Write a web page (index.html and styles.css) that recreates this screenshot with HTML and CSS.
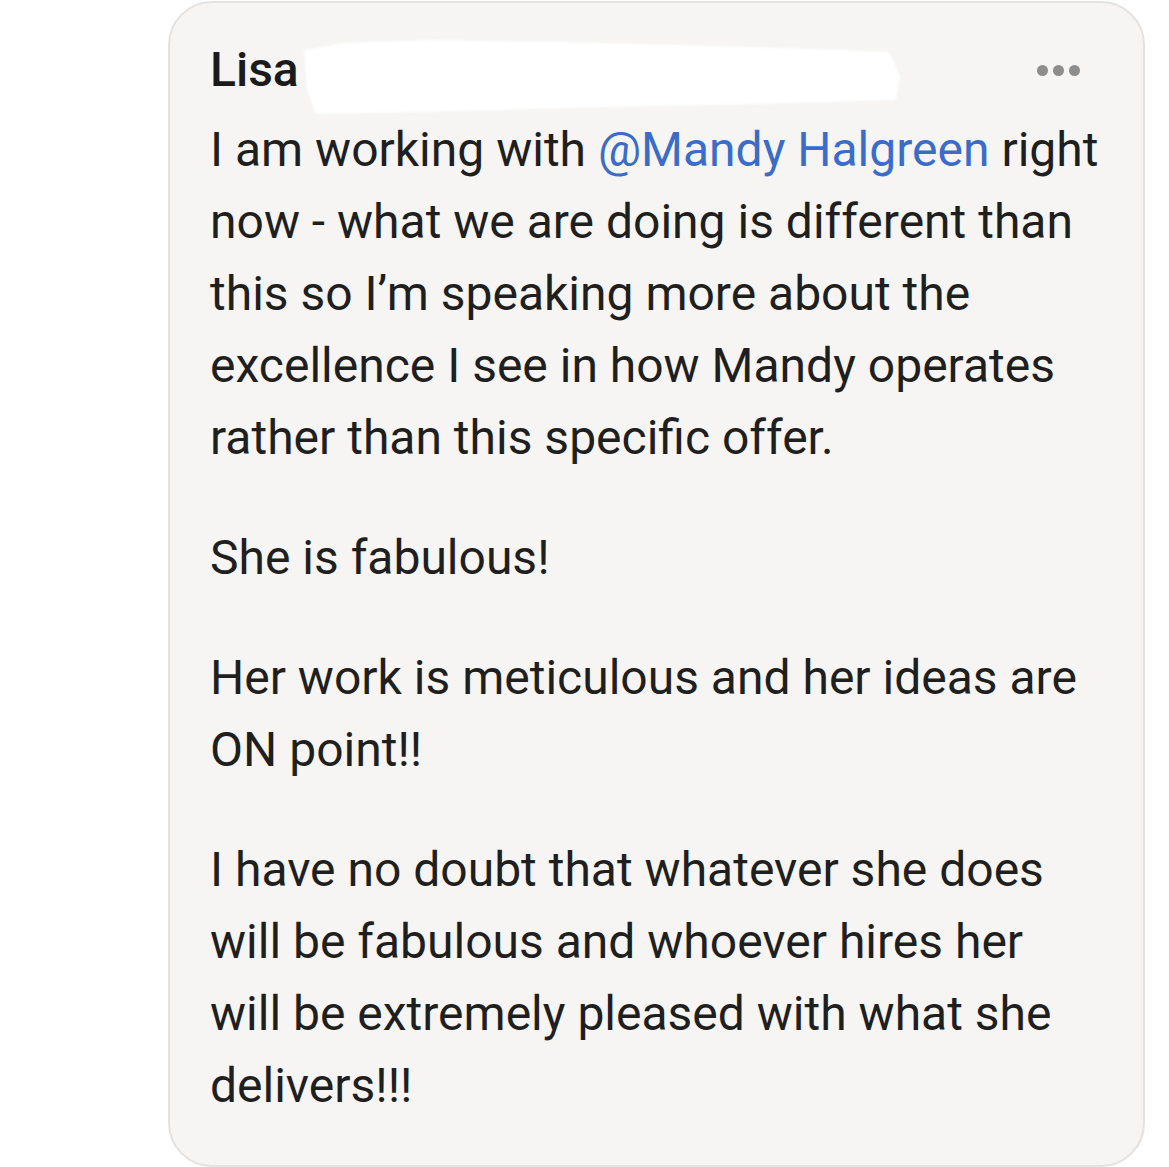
FILE: index.html
```html
<!DOCTYPE html>
<html lang="en">
<head>
<meta charset="utf-8">
<title>Comment</title>
<link rel="stylesheet" href="styles.css">
</head>
<body>
<div class="page">
  <article class="card">
    <header class="card-header">
      <span class="author">Lisa</span>
      <span class="more" aria-label="More options"><i></i><i></i><i></i></span>
    </header>
    <div class="body">
      <p>I am working with <span class="mention">@Mandy Halgreen</span> right now - what we are doing is different than this so I’m speaking more about the excellence I see in how Mandy operates rather than this specific offer.</p>
      <p>She is fabulous!</p>
      <p>Her work is meticulous and her ideas are ON point!!</p>
      <p>I have no doubt that whatever she does will be fabulous and whoever hires her will be extremely pleased with what she delivers!!!</p>
    </div>
    <svg class="redact" width="600" height="80" viewBox="0 0 600 80" aria-hidden="true">
      <polygon points="0,12 40,5 130,2 300,5 480,10 585,14 596,38 592,62 450,66 300,69 150,73 12,76 3,52" fill="#ffffff"/>
    </svg>
  </article>
</div>
</body>
</html>
```

FILE: styles.css
```css
html, body {
  margin: 0;
  padding: 0;
  background: #ffffff;
}

.page {
  padding: 1px 0 0 168px;
}

.card {
  position: relative;
  box-sizing: border-box;
  width: 977px;
  background: #f6f5f4;
  border: 2px solid #e3e2e1;
  border-radius: 44px;
  padding: 31px 39px 43px 40px;
  font-family: Roboto, "Noto Sans", "Liberation Sans", sans-serif;
  font-size: 48px;
  line-height: 72px;
  color: #1f1f20;
}

.card-header {
  display: flex;
  align-items: center;
  justify-content: space-between;
  margin-bottom: 8px;
}

.author {
  font-weight: 500;
  color: #1b1b1c;
}

.more {
  display: flex;
  gap: 5px;
  margin-right: 24px;
}

.more i {
  display: block;
  width: 11px;
  height: 11px;
  border-radius: 50%;
  background: #8d8d8d;
}

.body p {
  margin: 0 0 48px;
}

.body p:last-child {
  margin-bottom: 0;
}

.mention {
  color: #3a6cc9;
}

.redact {
  position: absolute;
  left: 134px;
  top: 35px;
  filter: blur(0.8px);
}
```
